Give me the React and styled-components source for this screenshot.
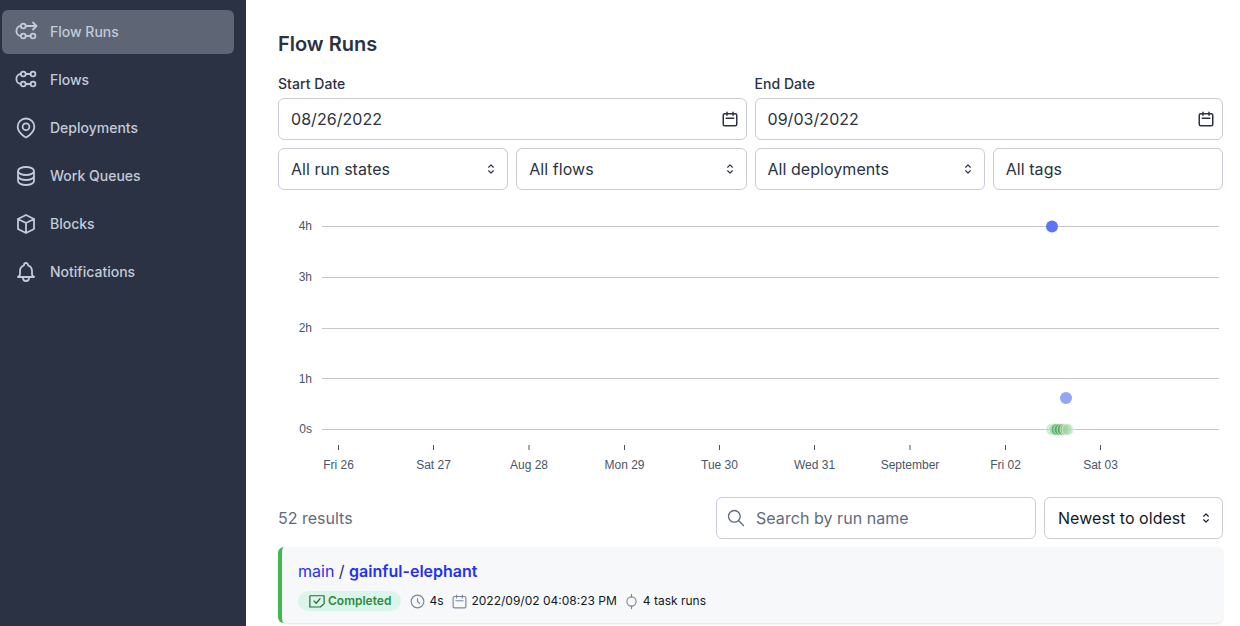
import React from "react";
import styled, { createGlobalStyle } from "styled-components";

const Global = createGlobalStyle`
  html, body { margin: 0; padding: 0; height: 100%; overflow: hidden; background: #fff; }
  body { font-family: Inter, "Liberation Sans", sans-serif; }
`;
const Shell = styled.div`display: flex; height: 626px; width: 1240px; overflow: hidden;`;
const Sidebar = styled.nav`
  width: 246px; flex: none; background: #2a3243; box-sizing: border-box;
  padding: 10px 12px 0 2px; display: flex; flex-direction: column; gap: 4px;
`;
const NavItem = styled.a`
  height: 44px; display: flex; align-items: center; gap: 12px; padding-left: 12px;
  border-radius: 6px; background: ${p => (p.$active ? "#5e6675" : "transparent")};
  color: #c3cad8; font-size: 14px; font-weight: 500; line-height: 20px;
  svg { width: 24px; height: 24px; flex: none; }
`;
const Main = styled.main`
  flex: 1; min-width: 0; box-sizing: border-box; padding: 30px 17px 0 32px;
  display: flex; flex-direction: column;
`;
const Title = styled.h1`margin: 0 0 16px; font-size: 20px; line-height: 28px; font-weight: 600; color: #2a3243;`;
const Filters = styled.div`display: grid; grid-template-columns: repeat(4, 1fr); gap: 8px;`;
const DateField = styled.label`grid-column: span 2; display: flex; flex-direction: column; gap: 4px;`;
const LabelText = styled.span`font-size: 14px; line-height: 20px; font-weight: 500; color: #2a3243; letter-spacing: .05px;`;
const Control = styled.div`
  height: 42px; box-sizing: border-box; display: flex; align-items: center; justify-content: space-between;
  border: 1px solid #c9ccd8; border-radius: 6px; background: #fff;
  padding: 0 ${p => p.$pr || 12}px 0 12px; font-size: 16px; line-height: 24px; color: ${p => p.$color || "#2a3243"};
  letter-spacing: .05px;
  svg { flex: none; }
`;
const Chart = styled.svg`display: block; width: 945px; height: 280px; margin-top: 10px; flex: none;`;
const AxisText = styled.text`font-family: "Liberation Sans", Arial, sans-serif; font-size: 12px; fill: #4b5568;`;
const ResultsBar = styled.div`display: flex; align-items: center; gap: 8px; margin-top: 17px;`;
const Count = styled.div`flex: 1; font-size: 16px; line-height: 24px; color: #5f6b7f;`;
const SearchBox = styled(Control)`width: 320px; justify-content: flex-start; gap: 10px; color: #5f6b7f; padding-left: 9px;`;
const SortBox = styled(Control)`width: 179px; color: #111827; padding-left: 13px;`;
const Card = styled.article`
  margin-top: 8px; height: 76px; box-sizing: border-box; background: #f7f8fa; border-left: 4px solid #3fb950;
  border-radius: 6px; padding: 12px 16px; box-shadow: 0 1px 2px rgba(0,0,0,.12);
  display: flex; flex-direction: column; gap: 8px; flex: none;
`;
const RunName = styled.div`font-size: 16px; line-height: 24px; color: #2a3243;`;
const FlowLink = styled.span`color: #2430f5;`;
const RunLink = styled.span`color: #2430f5; font-weight: 600;`;
const Meta = styled.div`display: flex; align-items: center; font-size: 12px; line-height: 20px; color: #111827;`;
const Badge = styled.span`
  display: flex; align-items: center; gap: 2px; height: 20px; padding: 0 10px; border-radius: 10px;
  background: #dcf5ea; color: #2e8b3d; font-weight: 600; margin-right: 8px;
`;
const MetaItem = styled.span`display: flex; align-items: center; gap: 3px; margin-right: ${p => p.$mr ?? 8}px; svg { flex: none; }`;

const Ic = ({ d, size = 24, sw = 2, color = "currentColor" }) => (
  <svg width={size} height={size} viewBox="0 0 24 24" fill="none" stroke={color} strokeWidth={sw} strokeLinecap="round" strokeLinejoin="round"><path d={d} /></svg>
);
const P = {
  cal: "M8 7V3m8 4V3m-9 8h10M5 21h14a2 2 0 002-2V7a2 2 0 00-2-2H5a2 2 0 00-2 2v12a2 2 0 002 2z",
  sel: "M8 9l4-4 4 4m0 6l-4 4-4-4",
  clock: "M12 8v4l3 3m6-3a9 9 0 11-18 0 9 9 0 0118 0z",
  search: "M21 21l-6-6m2-5a7 7 0 11-14 0 7 7 0 0114 0z",
  cube: "M20 7l-8-4-8 4m16 0l-8 4m8-4v10l-8 4m0-10L4 7m8 4v10M4 7v10l8 4",
  db: "M4 7v10c0 2.21 3.582 4 8 4s8-1.79 8-4V7M4 7c0 2.21 3.582 4 8 4s8-1.79 8-4M4 7c0-2.21 3.582-4 8-4s8 1.79 8 4m0 5c0 2.21-3.582 4-8 4s-8-1.79-8-4",
  bell: "M15 17h5l-1.405-1.405A2.032 2.032 0 0118 14.158V11a6.002 6.002 0 00-4-5.659V5a2 2 0 10-4 0v.341C7.67 6.165 6 8.388 6 11v3.159c0 .538-.214 1.055-.595 1.436L4 17h5m6 0v1a3 3 0 11-6 0v-1m6 0H9",
};
const FlowIcon = ({ run }) => (
  <svg viewBox="0 0 24 24" fill="none" stroke="currentColor" strokeWidth="1.8" strokeLinecap="round" strokeLinejoin="round">
    <circle cx="9.300" cy="6" r="2.400" />
    <circle cx="9.300" cy="16" r="2.400" />
    <circle cx="19" cy="16" r="2.400" />
    {!run && <circle cx="19" cy="6" r="2.400" />}
    <path d={run ? "M11.700 6H22.500M19 2.500L22.500 6L19 9.500" : "M11.700 6h4.900"} />
    <path d="M11.700 16h4.900" />
    <path d="M6.900 6C4 6 2.400 8.300 2.400 11S4 16 6.900 16" />
  </svg>
);
const PinIcon = () => (
  <svg viewBox="0 0 24 24" fill="none" stroke="currentColor" strokeWidth="1.8" strokeLinejoin="round">
    <path d="M12 21.500C12 21.500 20.300 17 20.300 10.800A8.300 8.300 0 0 0 3.700 10.800C3.700 17 12 21.500 12 21.500Z" />
    <circle cx="12" cy="10.800" r="3.400" />
  </svg>
);

const nav = [
  ["Flow Runs", <FlowIcon run />, true],
  ["Flows", <FlowIcon />],
  ["Deployments", <PinIcon />],
  ["Work Queues", <Ic d={P.db} sw={1.8} />],
  ["Blocks", <Ic d={P.cube} sw={1.8} />],
  ["Notifications", <Ic d={P.bell} sw={1.8} />],
];
const yTicks = [["4h", 26, 30], ["3h", 77, 80.5], ["2h", 128, 131.5], ["1h", 178, 182.5], ["0s", 229, 233]];
const xTicks = [["Fri 26", 60.5], ["Sat 27", 155.5], ["Aug 28", 251], ["Mon 29", 346.5], ["Tue 30", 441.5], ["Wed 31", 536.5], ["September", 632], ["Fri 02", 727.5], ["Sat 03", 822.5]];
const dots = [[774, "#8fd69a", .45], [777, "#6cc77b", .55], [779, "#45ad58", .7], [782, "#45ad58", .6], [785, "#8a9a55", .55], [788, "#7fcf8a", .55], [790, "#b5e3bb", .5]];

export default function App() {
  return (
    <Shell>
      <Global />
      <Sidebar>
        {nav.map(([t, icon, a]) => <NavItem key={t} $active={a}>{icon}{t}</NavItem>)}
      </Sidebar>
      <Main>
        <Title>Flow Runs</Title>
        <Filters>
          <DateField><LabelText>Start Date</LabelText><Control $pr={7}>08/26/2022<Ic d={P.cal} size={18} color="#2a3243" /></Control></DateField>
          <DateField><LabelText>End Date</LabelText><Control $pr={7}>09/03/2022<Ic d={P.cal} size={18} color="#2a3243" /></Control></DateField>
          <Control $pr={9}>All run states<Ic d={P.sel} size={14} color="#2a3243" /></Control>
          <Control $pr={9}>All flows<Ic d={P.sel} size={14} color="#2a3243" /></Control>
          <Control $pr={9}>All deployments<Ic d={P.sel} size={14} color="#2a3243" /></Control>
          <Control>All tags</Control>
        </Filters>
        <Chart viewBox="0 0 945 280">
          {yTicks.map(([l, y, ly]) => (
            <g key={l}>
              <line x1="44" x2="941" y1={y + .5} y2={y + .5} stroke="#c4c6cc" />
              <AxisText x="34" y={ly} textAnchor="end">{l}</AxisText>
            </g>
          ))}
          {xTicks.map(([l, x]) => (
            <g key={l}>
              <line x1={x} x2={x} y1="245" y2="250" stroke="#4b5568" />
              <AxisText x={x} y="269" textAnchor="middle">{l}</AxisText>
            </g>
          ))}
          <circle cx="774" cy="26.500" r="6" fill="#5b74f0" />
          <circle cx="788" cy="198" r="6" fill="#93a5f7" />
          {dots.map(([x, c, o]) => <circle key={x} cx={x} cy="229.500" r="6" fill={c} fillOpacity={o} stroke="#fff" strokeOpacity=".6" strokeWidth="1" />)}
        </Chart>
        <ResultsBar>
          <Count>52 results</Count>
          <SearchBox><Ic d={P.search} size={20} sw={1.6} color="#5f6b7f" />Search by run name</SearchBox>
          <SortBox $pr={9}>Newest to oldest<Ic d={P.sel} size={14} color="#111827" /></SortBox>
        </ResultsBar>
        <Card>
          <RunName><FlowLink>main</FlowLink> / <RunLink>gainful-elephant</RunLink></RunName>
          <Meta>
            <Badge>
              <svg width="18" height="18" viewBox="0 0 24 24" fill="none" stroke="#1f6f35" strokeWidth="1.600" strokeLinecap="round" strokeLinejoin="round"><path d="M2.500 5h19v10.500L16.500 20h-14zM8 12l3 3 5-6" /></svg>
              Completed
            </Badge>
            <MetaItem><Ic d={P.clock} size={17} sw={1.6} color="#7a869c" />4s</MetaItem>
            <MetaItem $mr={6}><Ic d={P.cal} size={17} sw={1.6} color="#7a869c" />2022/09/02 04:08:23 PM</MetaItem>
            <MetaItem>
              <svg width="17" height="17" viewBox="0 0 24 24" fill="none" stroke="#7a869c" strokeWidth="1.600" strokeLinecap="round"><circle cx="12" cy="12" r="6.500" /><path d="M12 2v3.500M12 18.500V22" /></svg>
              4 task runs
            </MetaItem>
          </Meta>
        </Card>
      </Main>
    </Shell>
  );
}
